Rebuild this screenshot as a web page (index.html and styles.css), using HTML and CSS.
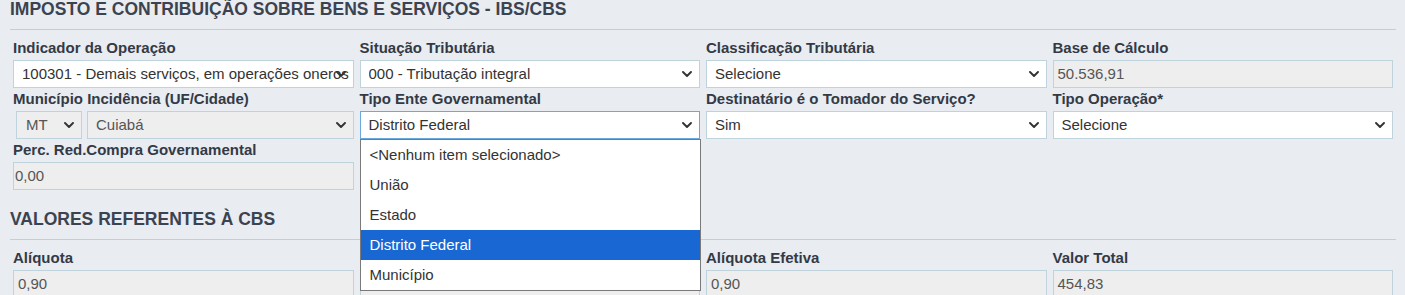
FILE: index.html
```html
<!DOCTYPE html>
<html lang="pt-BR">
<head>
<meta charset="utf-8">
<title>IBS/CBS</title>
<link rel="stylesheet" href="styles.css">
</head>
<body>
<section class="section">
  <h2 class="section-title">IMPOSTO E CONTRIBUIÇÃO SOBRE BENS E SERVIÇOS - IBS/CBS</h2>
  <div class="grid">
    <div class="field">
      <label class="label">Indicador da Operação</label>
      <div class="select"><span class="sel-text">100301 - Demais serviços, em operações onerosas</span><svg class="chev" viewBox="0 0 10 6"><path d="M1 1 L5 5 L9 1"/></svg></div>
    </div>
    <div class="field">
      <label class="label">Situação Tributária</label>
      <div class="select"><span class="sel-text">000 - Tributação integral</span><svg class="chev" viewBox="0 0 10 6"><path d="M1 1 L5 5 L9 1"/></svg></div>
    </div>
    <div class="field">
      <label class="label">Classificação Tributária</label>
      <div class="select"><span class="sel-text">Selecione</span><svg class="chev" viewBox="0 0 10 6"><path d="M1 1 L5 5 L9 1"/></svg></div>
    </div>
    <div class="field">
      <label class="label">Base de Cálculo</label>
      <div class="input disabled">50.536,91</div>
    </div>

    <div class="field">
      <label class="label">Município Incidência (UF/Cidade)</label>
      <div class="pair">
        <div class="select disabled uf"><span class="sel-text">MT</span><svg class="chev" viewBox="0 0 10 6"><path d="M1 1 L5 5 L9 1"/></svg></div>
        <div class="select disabled city"><span class="sel-text">Cuiabá</span><svg class="chev" viewBox="0 0 10 6"><path d="M1 1 L5 5 L9 1"/></svg></div>
      </div>
    </div>
    <div class="field">
      <label class="label">Tipo Ente Governamental</label>
      <div class="select focused"><span class="sel-text">Distrito Federal</span><svg class="chev" viewBox="0 0 10 6"><path d="M1 1 L5 5 L9 1"/></svg>
        <ul class="dropdown">
          <li class="opt">&lt;Nenhum item selecionado&gt;</li>
          <li class="opt">União</li>
          <li class="opt">Estado</li>
          <li class="opt active">Distrito Federal</li>
          <li class="opt">Município</li>
        </ul>
      </div>
    </div>
    <div class="field">
      <label class="label">Destinatário é o Tomador do Serviço?</label>
      <div class="select"><span class="sel-text">Sim</span><svg class="chev" viewBox="0 0 10 6"><path d="M1 1 L5 5 L9 1"/></svg></div>
    </div>
    <div class="field">
      <label class="label">Tipo Operação*</label>
      <div class="select"><span class="sel-text">Selecione</span><svg class="chev" viewBox="0 0 10 6"><path d="M1 1 L5 5 L9 1"/></svg></div>
    </div>

    <div class="field">
      <label class="label">Perc. Red.Compra Governamental</label>
      <div class="input disabled tight">0,00</div>
    </div>
  </div>
</section>

<section class="section second">
  <h2 class="section-title">VALORES REFERENTES À CBS</h2>
  <div class="grid">
    <div class="field">
      <label class="label">Alíquota</label>
      <div class="input disabled">0,90</div>
    </div>
    <div class="field">
      <label class="label">Percentual da Redução</label>
      <div class="input disabled">0,00</div>
    </div>
    <div class="field">
      <label class="label">Alíquota Efetiva</label>
      <div class="input disabled">0,90</div>
    </div>
    <div class="field">
      <label class="label">Valor Total</label>
      <div class="input disabled">454,83</div>
    </div>
  </div>
</section>
</body>
</html>
```

FILE: styles.css
```css
* { box-sizing: border-box; }

html, body {
  margin: 0;
  padding: 0;
  background: #e9ecf1;
  font-family: "Liberation Sans", Arial, sans-serif;
  font-size: 15px;
  color: #333;
  overflow: hidden;
}

.section {
  margin: 0 9px 0 10px;
}

.section.second {
  margin-top: 19px;
}

.section-title {
  margin: 0;
  font-size: 17.5px;
  font-weight: bold;
  line-height: 18px;
  color: #3c4350;
  padding-bottom: 11px;
  border-bottom: 1px solid #c9cdd3;
}

.grid {
  display: grid;
  grid-template-columns: repeat(4, 1fr);
  column-gap: 6px;
  padding: 8px 3px 0 3px;
}

.field {
  display: flex;
  flex-direction: column;
  margin-bottom: 1px;
  min-width: 0;
}

.label {
  font-weight: bold;
  font-size: 15px;
  line-height: 20px;
  color: #333a46;
  margin-bottom: 2px;
  white-space: nowrap;
}

.select,
.input {
  position: relative;
  height: 28px;
  border: 1px solid #bfd3dd;
  background: #fff;
  font-size: 15px;
  line-height: 26px;
  color: #333;
  white-space: nowrap;
}

.select {
  display: flex;
  align-items: center;
  padding: 0 4px 0 8px;
}

.sel-text {
  flex: 1;
  min-width: 0;
  overflow: hidden;
  line-height: 26px;
}

.chev {
  position: absolute;
  right: 7px;
  top: 10px;
  width: 10px;
  height: 6px;
}

.chev path {
  fill: none;
  stroke: #333;
  stroke-width: 1.9;
  stroke-linecap: round;
  stroke-linejoin: round;
}

.input {
  padding: 0 4px;
  overflow: hidden;
}

.input.tight {
  padding-left: 1px;
}

.disabled {
  background: #eeeeee;
  color: #555;
}

.select.focused {
  border-color: #6aa9de;
}

.pair {
  display: flex;
  gap: 5px;
  padding-left: 3px;
}

.select.uf {
  width: 66px;
  flex: none;
  padding-left: 9px;
}

.select.city {
  flex: 1;
}

.dropdown {
  position: absolute;
  top: 27px;
  left: -1px;
  width: calc(100% + 3px);
  margin: 0;
  padding: 0;
  list-style: none;
  background: #fff;
  border: 1px solid #7a7a7a;
  z-index: 10;
}

.opt {
  height: 30px;
  line-height: 30px;
  padding: 0 9px;
  color: #333;
  font-size: 15px;
}

.opt.active {
  background: #1967d2;
  color: #fff;
}
```
